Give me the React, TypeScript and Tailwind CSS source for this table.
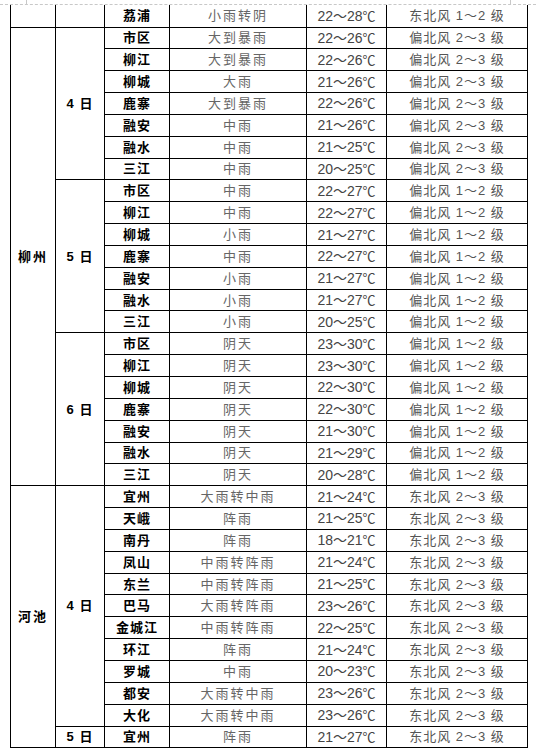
import React from "react";

type Row = [string, string, string, string];

interface DayGroup {
  day: string;
  rows: Row[];
}

interface CityGroup {
  city: string;
  days: DayGroup[];
}

const N12 = "偏北风 1～2 级";
const N23 = "偏北风 2～3 级";
const E23 = "东北风 2～3 级";

const data: CityGroup[] = [
  {
    city: "柳州",
    days: [
      {
        day: "4 日",
        rows: [
          ["市区", "大到暴雨", "22～26", N23],
          ["柳江", "大到暴雨", "22～26", N23],
          ["柳城", "大雨", "21～26", N23],
          ["鹿寨", "大到暴雨", "22～26", N23],
          ["融安", "中雨", "21～26", N23],
          ["融水", "中雨", "21～25", N23],
          ["三江", "中雨", "20～25", N23],
        ],
      },
      {
        day: "5 日",
        rows: [
          ["市区", "中雨", "22～27", N12],
          ["柳江", "中雨", "22～27", N12],
          ["柳城", "小雨", "21～27", N12],
          ["鹿寨", "中雨", "22～27", N12],
          ["融安", "小雨", "21～27", N12],
          ["融水", "小雨", "21～27", N12],
          ["三江", "小雨", "20～25", N12],
        ],
      },
      {
        day: "6 日",
        rows: [
          ["市区", "阴天", "23～30", N12],
          ["柳江", "阴天", "23～30", N12],
          ["柳城", "阴天", "22～30", N12],
          ["鹿寨", "阴天", "22～30", N12],
          ["融安", "阴天", "21～30", N12],
          ["融水", "阴天", "21～29", N12],
          ["三江", "阴天", "20～28", N12],
        ],
      },
    ],
  },
  {
    city: "河池",
    days: [
      {
        day: "4 日",
        rows: [
          ["宜州", "大雨转中雨", "21～24", E23],
          ["天峨", "阵雨", "21～25", E23],
          ["南丹", "阵雨", "18～21", E23],
          ["凤山", "中雨转阵雨", "21～24", E23],
          ["东兰", "中雨转阵雨", "21～25", E23],
          ["巴马", "大雨转阵雨", "23～26", E23],
          ["金城江", "中雨转阵雨", "22～25", E23],
          ["环江", "阵雨", "21～24", E23],
          ["罗城", "中雨", "20～23", E23],
          ["都安", "大雨转中雨", "23～26", E23],
          ["大化", "大雨转中雨", "23～26", E23],
        ],
      },
      {
        day: "5 日",
        rows: [["宜州", "阵雨", "21～27", E23]],
      },
    ],
  },
];

const cell = "border border-black text-center align-middle p-0 leading-none";
const bold = "font-bold text-black";
const cjk = { fontFamily: '"Noto Sans CJK SC", sans-serif' };

function Temp({ range }: { range: string }) {
  return (
    <>
      {range}
      <span style={cjk} className="text-[13px]">℃</span>
    </>
  );
}

function DataCells({ row, top = true }: { row: Row; top?: boolean }) {
  const [place, weather, temp, wind] = row;
  const t = top ? "" : "border-t-0";
  return (
    <>
      <td className={`${cell} ${t} ${bold} text-[13px] tracking-[1px]`}>{place}</td>
      <td className={`${cell} ${t} text-[13px] tracking-[2px] text-[#666]`}>{weather}</td>
      <td className={`${cell} ${t} text-[14px] text-[#444]`}>
        <Temp range={temp} />
      </td>
      <td className={`${cell} ${t} text-[13px] tracking-[1px] text-[#555]`}>{wind}</td>
    </>
  );
}

export default function App() {
  return (
    <div
      className="relative h-[752px] w-[536px] overflow-hidden bg-white"
      style={{ fontFamily: '"Liberation Sans", "Noto Sans CJK SC", sans-serif' }}
    >
      {/* page margin marks */}
      <div className="absolute left-0 right-0 top-[4px] border-t border-dashed border-[#c8c8c8]" />
      <div className="absolute left-[26px] top-0 h-[5px] border-l border-[#c8c8c8]" />
      <div className="absolute left-[510px] top-0 h-[5px] border-l border-[#c8c8c8]" />

      <div className="pl-[10px] pt-[5px]">
        <table className="border-collapse table-fixed w-[517px]">
          <colgroup>
            <col className="w-[45px]" />
            <col className="w-[49px]" />
            <col className="w-[65px]" />
            <col className="w-[137px]" />
            <col className="w-[80px]" />
            <col className="w-[141px]" />
          </colgroup>
          <tbody>
            <tr className="h-[22px]">
              <td className={`${cell} border-t-0`} />
              <td className={`${cell} border-t-0`} />
              <DataCells row={["荔浦", "小雨转阴", "22～28", "东北风 1～2 级"]} top={false} />
            </tr>
            {data.map((c) => {
              const total = c.days.reduce((n, d) => n + d.rows.length, 0);
              return c.days.map((d, di) =>
                d.rows.map((r, ri) => (
                  <tr key={`${c.city}-${d.day}-${ri}`} className="h-[21.85px]">
                    {di === 0 && ri === 0 && (
                      <td rowSpan={total} className={`${cell} ${bold} text-[13px] tracking-[2px]`}>
                        {c.city}
                      </td>
                    )}
                    {ri === 0 && (
                      <td rowSpan={d.rows.length} className={`${cell} ${bold} text-[13px] tracking-[1px]`}>
                        {d.day}
                      </td>
                    )}
                    <DataCells row={r} />
                  </tr>
                ))
              );
            })}
          </tbody>
        </table>
      </div>
    </div>
  );
}
